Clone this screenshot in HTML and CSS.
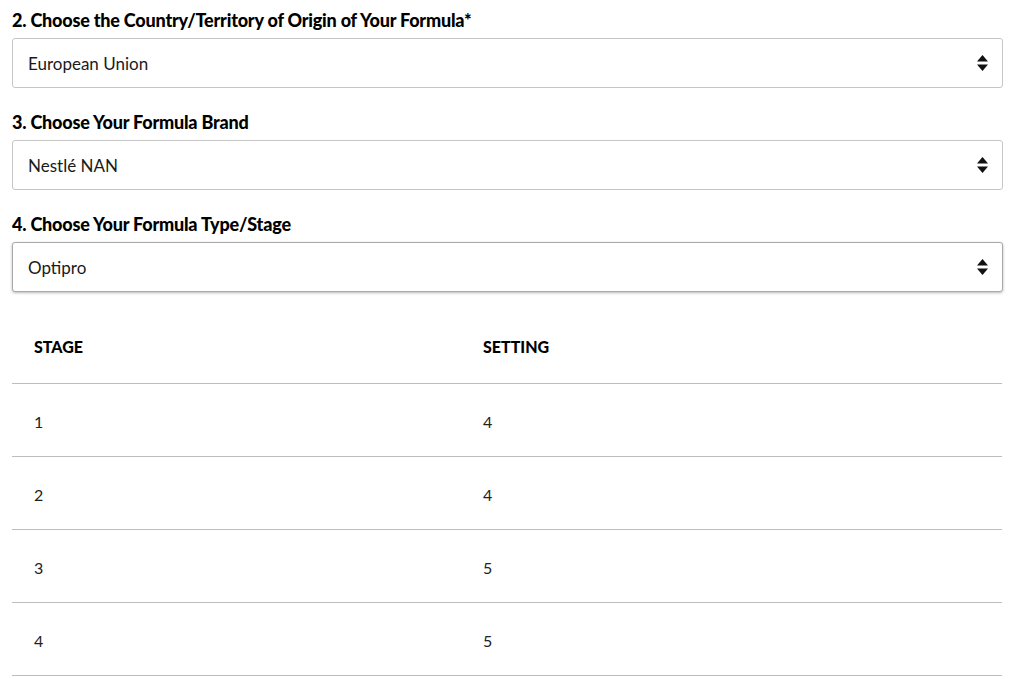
FILE: index.html
```html
<!DOCTYPE html>
<html lang="en">
<head>
<meta charset="utf-8">
<title>Formula settings</title>
<link rel="stylesheet" href="styles.css">
</head>
<body>
<main class="page">
  <div class="field">
    <label class="field-label">2. Choose the Country/Territory of Origin of Your Formula*</label>
    <div class="select">
      <span class="select-value">European Union</span>
      <svg class="select-arrow" viewBox="0 0 11 16" width="11" height="16"><path d="M5.5 0 L11 6.5 H0 Z"/><path d="M0 9.5 H11 L5.5 16 Z"/></svg>
    </div>
  </div>
  <div class="field">
    <label class="field-label">3. Choose Your Formula Brand</label>
    <div class="select">
      <span class="select-value">Nestlé NAN</span>
      <svg class="select-arrow" viewBox="0 0 11 16" width="11" height="16"><path d="M5.5 0 L11 6.5 H0 Z"/><path d="M0 9.5 H11 L5.5 16 Z"/></svg>
    </div>
  </div>
  <div class="field">
    <label class="field-label">4. Choose Your Formula Type/Stage</label>
    <div class="select select-focus">
      <span class="select-value">Optipro</span>
      <svg class="select-arrow" viewBox="0 0 11 16" width="11" height="16"><path d="M5.5 0 L11 6.5 H0 Z"/><path d="M0 9.5 H11 L5.5 16 Z"/></svg>
    </div>
  </div>
  <table class="settings">
    <thead>
      <tr><th class="col-stage">STAGE</th><th>SETTING</th></tr>
    </thead>
    <tbody>
      <tr><td>1</td><td>4</td></tr>
      <tr><td>2</td><td>4</td></tr>
      <tr><td>3</td><td>5</td></tr>
      <tr><td>4</td><td>5</td></tr>
    </tbody>
  </table>
</main>
</body>
</html>
```

FILE: styles.css
```css
html, body {
  margin: 0;
  padding: 0;
  background: #fff;
}
body {
  font-family: Lato, "Open Sans", "Liberation Sans", sans-serif;
  color: #111;
}
.page {
  padding: 9px 15px 0 12px;
}
.field {
  margin-bottom: 23px;
}
.field-label {
  display: block;
  font-size: 18px;
  font-weight: 900;
  line-height: 22px;
  color: #000;
  margin-bottom: 7px;
  letter-spacing: -0.2px;
}
.select {
  display: flex;
  align-items: center;
  justify-content: space-between;
  box-sizing: border-box;
  height: 50px;
  padding: 0 14px 0 15px;
  border: 1px solid #c6c6c6;
  border-radius: 3px;
  background: #fff;
}
.select-focus {
  border-color: #a9a9a9;
  box-shadow: 0 1px 3px rgba(0, 0, 0, 0.28);
}
.select-value {
  font-size: 17px;
  color: #1a1a1a;
}
.select-arrow {
  fill: #111;
}
.settings {
  width: 990px;
  border-collapse: collapse;
  margin-top: -4px;
}
.settings th,
.settings td {
  text-align: left;
  padding: 0 0 0 22px;
  font-size: 16px;
}
.settings th {
  height: 71px;
  padding-bottom: 1px;
  font-weight: 900;
  color: #000;
  border-bottom: 1px solid #bdbdbd;
}
.settings td {
  height: 70px;
  font-weight: 400;
  color: #222;
  padding-top: 2px;
  border-bottom: 1px solid #bdbdbd;
}
.settings .col-stage {
  width: 427px;
}
```
